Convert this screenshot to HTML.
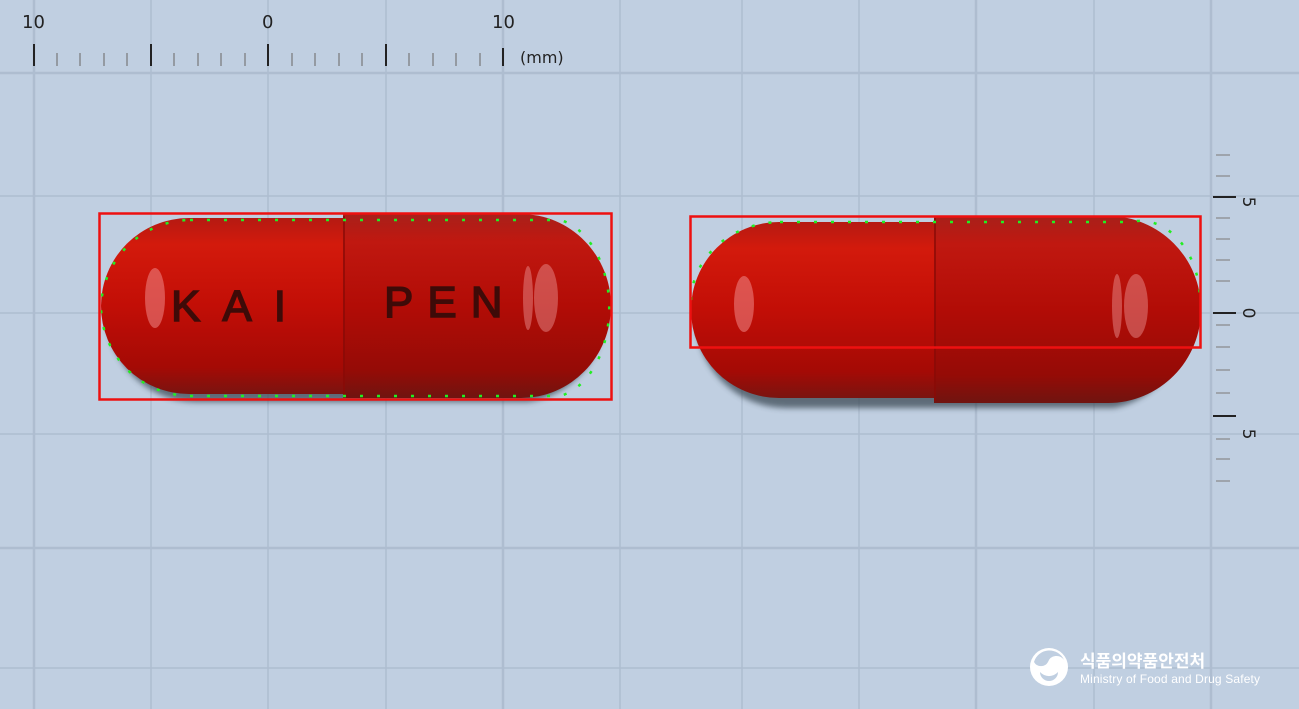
<!DOCTYPE html>
<html><head><meta charset="utf-8"><style>
html,body{margin:0;padding:0;background:#c0cfe1;width:1299px;height:709px;overflow:hidden}
svg{display:block}
</style></head><body>
<svg width="1299" height="709" viewBox="0 0 1299 709" xmlns="http://www.w3.org/2000/svg">
<defs>
<linearGradient id="rg" x1="0" y1="0" x2="0" y2="1">
<stop offset="0" stop-color="#b51a12"/><stop offset="0.15" stop-color="#d31a0c"/><stop offset="0.5" stop-color="#c20e06"/><stop offset="0.85" stop-color="#a40a05"/><stop offset="1" stop-color="#7a1410"/>
</linearGradient>
<linearGradient id="rg2" x1="0" y1="0" x2="0" y2="1">
<stop offset="0" stop-color="#a8201a"/><stop offset="0.15" stop-color="#c01810"/><stop offset="0.5" stop-color="#b20c06"/><stop offset="0.85" stop-color="#950b06"/><stop offset="1" stop-color="#701410"/>
</linearGradient>
<filter id="sh"><feGaussianBlur stdDeviation="3"/></filter>
</defs>
<g stroke="#aebdd0" stroke-width="1.5">
<line x1="34" y1="0" x2="34" y2="709" stroke-width="2.5"/><line x1="151" y1="0" x2="151" y2="709"/><line x1="268" y1="0" x2="268" y2="709"/><line x1="386" y1="0" x2="386" y2="709"/><line x1="503" y1="0" x2="503" y2="709" stroke-width="2.5"/><line x1="620" y1="0" x2="620" y2="709"/><line x1="742" y1="0" x2="742" y2="709"/><line x1="859" y1="0" x2="859" y2="709"/><line x1="976" y1="0" x2="976" y2="709" stroke-width="2.5"/><line x1="1094" y1="0" x2="1094" y2="709"/><line x1="1211" y1="0" x2="1211" y2="709" stroke-width="2.5"/>
<line x1="0" y1="73" x2="1299" y2="73" stroke-width="2.5"/><line x1="0" y1="196" x2="1299" y2="196"/><line x1="0" y1="313" x2="1299" y2="313"/><line x1="0" y1="434" x2="1299" y2="434"/><line x1="0" y1="548" x2="1299" y2="548" stroke-width="2.5"/><line x1="0" y1="668" x2="1299" y2="668"/>
</g>
<g font-family="DejaVu Sans, sans-serif" font-size="18" fill="#222">
<text x="22" y="28">10</text><text x="262" y="28">0</text><text x="492" y="28">10</text>
<text x="520" y="63" font-size="16">(mm)</text>
</g>
<g stroke="#222" stroke-width="2">
<line x1="34" y1="44" x2="34" y2="66"/><line x1="151" y1="44" x2="151" y2="66"/><line x1="268" y1="44" x2="268" y2="66"/><line x1="386" y1="44" x2="386" y2="66"/><line x1="503" y1="48" x2="503" y2="66"/>
</g>
<g stroke="#777" stroke-width="1.2">
<line x1="57" y1="53" x2="57" y2="66"/><line x1="80" y1="53" x2="80" y2="66"/><line x1="104" y1="53" x2="104" y2="66"/><line x1="127" y1="53" x2="127" y2="66"/>
<line x1="174" y1="53" x2="174" y2="66"/><line x1="198" y1="53" x2="198" y2="66"/><line x1="221" y1="53" x2="221" y2="66"/><line x1="245" y1="53" x2="245" y2="66"/>
<line x1="292" y1="53" x2="292" y2="66"/><line x1="315" y1="53" x2="315" y2="66"/><line x1="339" y1="53" x2="339" y2="66"/><line x1="362" y1="53" x2="362" y2="66"/>
<line x1="409" y1="53" x2="409" y2="66"/><line x1="433" y1="53" x2="433" y2="66"/><line x1="456" y1="53" x2="456" y2="66"/><line x1="480" y1="53" x2="480" y2="66"/>
</g>
<g stroke="#888" stroke-width="1.2">
<line x1="1216" y1="155" x2="1230" y2="155"/><line x1="1216" y1="176" x2="1230" y2="176"/><line x1="1216" y1="218" x2="1230" y2="218"/><line x1="1216" y1="239" x2="1230" y2="239"/><line x1="1216" y1="260" x2="1230" y2="260"/><line x1="1216" y1="281" x2="1230" y2="281"/>
<line x1="1216" y1="325" x2="1230" y2="325"/><line x1="1216" y1="347" x2="1230" y2="347"/><line x1="1216" y1="370" x2="1230" y2="370"/><line x1="1216" y1="393" x2="1230" y2="393"/>
<line x1="1216" y1="439" x2="1230" y2="439"/><line x1="1216" y1="459" x2="1230" y2="459"/><line x1="1216" y1="481" x2="1230" y2="481"/>
</g>
<g stroke="#222" stroke-width="2">
<line x1="1213" y1="197" x2="1236" y2="197"/><line x1="1213" y1="313" x2="1236" y2="313"/><line x1="1213" y1="416" x2="1236" y2="416"/>
</g>
<g font-family="DejaVu Sans, sans-serif" font-size="17" fill="#222">
<text transform="translate(1243,202) rotate(90)" text-anchor="middle">5</text>
<text transform="translate(1243,313) rotate(90)" text-anchor="middle">0</text>
<text transform="translate(1243,434) rotate(90)" text-anchor="middle">5</text>
</g>
<path d="M196 224 H528 A90 90 0 0 1 528 402 H196 A88 88 0 0 1 196 224Z" fill="#34424d" filter="url(#sh)" opacity="0.7"/>
<path d="M189 218 H360 V394 H189 A88 88 0 0 1 189 218Z" fill="url(#rg)"/>
<path d="M343 214 H521 A90 92 0 0 1 521 398 H343Z" fill="url(#rg2)"/>
<line x1="344" y1="216" x2="344" y2="396" stroke="#8a0a06" stroke-width="1.5"/>
<ellipse cx="155" cy="298" rx="10" ry="30" fill="#e88" opacity="0.55"/>
<ellipse cx="546" cy="298" rx="12" ry="34" fill="#e99" opacity="0.45"/>
<ellipse cx="528" cy="298" rx="5" ry="32" fill="#e99" opacity="0.45"/>
<g font-family="Liberation Sans, sans-serif" font-size="44" fill="#3e0b08">
<text x="171" y="321" stroke="#3e0b08" stroke-width="1.5" letter-spacing="22">KAI</text><text x="384" y="317" stroke="#3e0b08" stroke-width="1.5" letter-spacing="14">PEN</text>
</g>
<path d="M190 220 H560 A60 90 0 0 1 609 300 A60 90 0 0 1 560 396 H190 A90 90 0 0 1 101 306 A90 90 0 0 1 190 220Z" fill="none" stroke="#22ee22" stroke-width="2.5" stroke-dasharray="3 14"/>
<rect x="99.5" y="213.5" width="512" height="186" fill="none" stroke="#ee1010" stroke-width="2.5"/>
<path d="M786 228 H1114 A92 92 0 0 1 1114 408 H786 A88 88 0 0 1 786 228Z" fill="#34424d" filter="url(#sh)" opacity="0.7"/>
<path d="M779 222 H950 V398 H779 A88 88 0 0 1 779 222Z" fill="url(#rg)"/>
<path d="M934 216 H1108 A93 93.5 0 0 1 1108 403 H934Z" fill="url(#rg2)"/>
<line x1="935" y1="218" x2="935" y2="401" stroke="#8a0a06" stroke-width="1.5"/>
<ellipse cx="744" cy="304" rx="10" ry="28" fill="#e88" opacity="0.55"/>
<ellipse cx="1136" cy="306" rx="12" ry="32" fill="#e99" opacity="0.45"/>
<ellipse cx="1117" cy="306" rx="5" ry="32" fill="#e99" opacity="0.45"/>
<path d="M780 222 H1130 A60 80 0 0 1 1200 300 M691 300 A90 80 0 0 1 780 222" fill="none" stroke="#22ee22" stroke-width="2.5" stroke-dasharray="3 14"/>
<rect x="690.5" y="216.5" width="510" height="131" fill="none" stroke="#ee1010" stroke-width="2.5"/>
<circle cx="1049" cy="667" r="19" fill="#fff"/>
<path d="M1034 662 A16 16 0 0 1 1064 660 A9 9 0 0 0 1048 662 A8 8 0 0 1 1034 662Z" fill="#c0cfe1"/>
<path d="M1040 672 A9 9 0 0 0 1058 672 A12 12 0 0 1 1040 672Z" fill="#c0cfe1"/>
<text x="1080" y="667" font-family="Liberation Sans, 'Noto Sans CJK KR', sans-serif" font-size="17" font-weight="bold" fill="#fff">식품의약품안전처</text>
<text x="1080" y="683" font-family="Liberation Sans, sans-serif" font-size="12" fill="#fff" textLength="180">Ministry of Food and Drug Safety</text>
</svg>
</body></html>
